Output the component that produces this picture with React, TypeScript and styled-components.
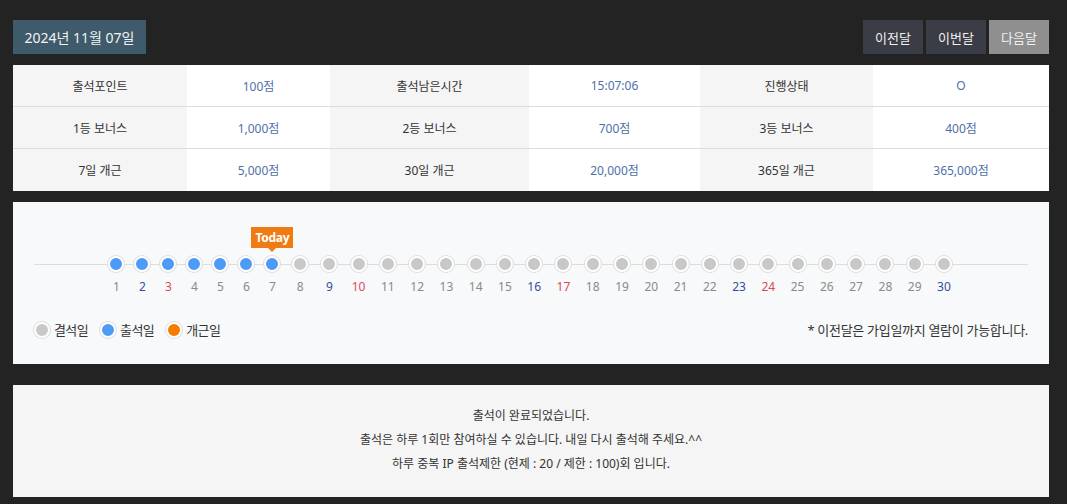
import React from "react";
import styled, { createGlobalStyle } from "styled-components";

const GlobalStyle = createGlobalStyle`
  html, body { margin: 0; padding: 0; background: #232323; }
  body { font-family: "Noto Sans", "Noto Sans CJK KR", sans-serif; }
  * { box-sizing: border-box; }
`;

const Page = styled.div`
  width: 1036px;
  margin-left: 13px;
  padding-top: 20px;
  display: flex;
  flex-direction: column;
`;

const Header = styled.div`
  display: flex;
  justify-content: space-between;
  align-items: center;
  height: 34px;
`;

const DateLabel = styled.div`
  background: #3e5a6b;
  color: #f2f2f2;
  height: 34px;
  width: 133px;
  display: flex;
  align-items: center;
  justify-content: center;
  font-size: 14px;
`;

const NavGroup = styled.div`
  display: flex;
  gap: 3px;
`;

const NavButton = styled.button<{ $active?: boolean }>`
  border: none;
  height: 34px;
  width: 60px;
  padding: 0;
  background: ${(p) => (p.$active ? "#8f8f8f" : "#3a3d45")};
  color: #f0f0f0;
  font-family: inherit;
  font-size: 13px;
  cursor: pointer;
`;

const InfoTable = styled.div`
  margin-top: 11px;
  display: grid;
  grid-template-columns: 174px 143px 199px 171px 173px 176px;
`;

const Cell = styled.div<{ $label?: boolean; $last?: boolean }>`
  height: 42px;
  display: flex;
  align-items: center;
  justify-content: center;
  font-size: 12px;
  background: ${(p) => (p.$label ? "#f5f5f5" : "#ffffff")};
  color: ${(p) => (p.$label ? "#333333" : "#4f6fa8")};
  border-bottom: ${(p) => (p.$last ? "none" : "1px solid #dddddd")};
`;

const CalendarPanel = styled.div`
  margin-top: 11px;
  background: #f8f9fa;
  padding: 54px 21px 25px;
`;

const Track = styled.div`
  position: relative;
  &::before {
    content: "";
    position: absolute;
    left: 0;
    right: 0;
    top: 8px;
    height: 1px;
    background: #dddddd;
  }
`;

const DayList = styled.div`
  position: relative;
  display: flex;
  justify-content: center;
`;

const DayItem = styled.div<{ $w: number }>`
  width: ${(p) => p.$w}px;
  display: flex;
  flex-direction: column;
  align-items: center;
  position: relative;
`;

const Dot = styled.span<{ $color: string }>`
  display: block;
  flex-shrink: 0;
  width: 16px;
  height: 16px;
  border-radius: 50%;
  background: ${(p) => p.$color};
  border: 2px solid #ffffff;
  box-shadow: 0 0 0 1px #dddddd;
`;

const DayNum = styled.span<{ $color: string }>`
  margin-top: 7px;
  font-size: 12px;
  line-height: 16px;
  color: ${(p) => p.$color};
`;

const TodayBadge = styled.span`
  position: absolute;
  left: 50%;
  transform: translateX(-50%);
  top: -29px;
  height: 21px;
  width: 42px;
  background: #ef7b12;
  color: #ffffff;
  font-size: 12px;
  font-weight: 700;
  display: flex;
  align-items: center;
  justify-content: center;
  letter-spacing: -0.3px;
  &::after {
    content: "";
    position: absolute;
    top: 100%;
    left: 50%;
    margin-left: -4px;
    border-left: 4px solid transparent;
    border-right: 4px solid transparent;
    border-top: 4px solid #ef7b12;
  }
`;

const LegendRow = styled.div`
  margin-top: 25px;
  display: flex;
  justify-content: space-between;
  align-items: center;
`;

const Legend = styled.div`
  display: flex;
  align-items: center;
  gap: 12px;
`;

const LegendItem = styled.div`
  display: flex;
  align-items: center;
  gap: 4px;
  font-size: 13px;
  color: #333333;
  letter-spacing: -0.6px;
`;

const Note = styled.div`
  font-size: 13px;
  color: #333333;
  letter-spacing: -0.3px;
`;

const MessagePanel = styled.div`
  margin-top: 21px;
  background: #f5f5f5;
  padding: 19px 0 21px;
  text-align: center;
  font-size: 12px;
  line-height: 24px;
  color: #333333;
`;

const BLUE = "#4d9bf7";
const GRAY = "#c8c8c8";
const ORANGE = "#f57c00";

const rows = [
  ["출석포인트", "100점", "출석남은시간", "15:07:06", "진행상태", "O"],
  ["1등 보너스", "1,000점", "2등 보너스", "700점", "3등 보너스", "400점"],
  ["7일 개근", "5,000점", "30일 개근", "20,000점", "365일 개근", "365,000점"],
];

const sat = [2, 9, 16, 23, 30];
const sun = [3, 10, 17, 24];

export default function App() {
  const days = Array.from({ length: 30 }, (_, i) => i + 1);
  return (
    <>
      <GlobalStyle />
      <Page>
        <Header>
          <DateLabel>2024년 11월 07일</DateLabel>
          <NavGroup>
            <NavButton>이전달</NavButton>
            <NavButton>이번달</NavButton>
            <NavButton $active>다음달</NavButton>
          </NavGroup>
        </Header>

        <InfoTable>
          {rows.map((r, ri) =>
            r.map((c, ci) => (
              <Cell key={`${ri}-${ci}`} $label={ci % 2 === 0} $last={ri === rows.length - 1}>
                {c}
              </Cell>
            ))
          )}
        </InfoTable>

        <CalendarPanel>
          <Track>
            <DayList>
              {days.map((d) => {
                const attended = d <= 7;
                const numColor = sat.includes(d) ? "#34509c" : sun.includes(d) ? "#e0465a" : "#8a8a8a";
                return (
                  <DayItem key={d} $w={attended ? 26 : 29.27}>
                    {d === 7 && <TodayBadge>Today</TodayBadge>}
                    <Dot $color={attended ? BLUE : GRAY} />
                    <DayNum $color={numColor}>{d}</DayNum>
                  </DayItem>
                );
              })}
            </DayList>
          </Track>
          <LegendRow>
            <Legend>
              <LegendItem>
                <Dot $color={GRAY} />
                결석일
              </LegendItem>
              <LegendItem>
                <Dot $color={BLUE} />
                출석일
              </LegendItem>
              <LegendItem>
                <Dot $color={ORANGE} />
                개근일
              </LegendItem>
            </Legend>
            <Note>* 이전달은 가입일까지 열람이 가능합니다.</Note>
          </LegendRow>
        </CalendarPanel>

        <MessagePanel>
          <div>출석이 완료되었습니다.</div>
          <div>출석은 하루 1회만 참여하실 수 있습니다. 내일 다시 출석해 주세요.^^</div>
          <div>하루 중복 IP 출석제한 (현제 : 20 / 제한 : 100)회 입니다.</div>
        </MessagePanel>
      </Page>
    </>
  );
}
